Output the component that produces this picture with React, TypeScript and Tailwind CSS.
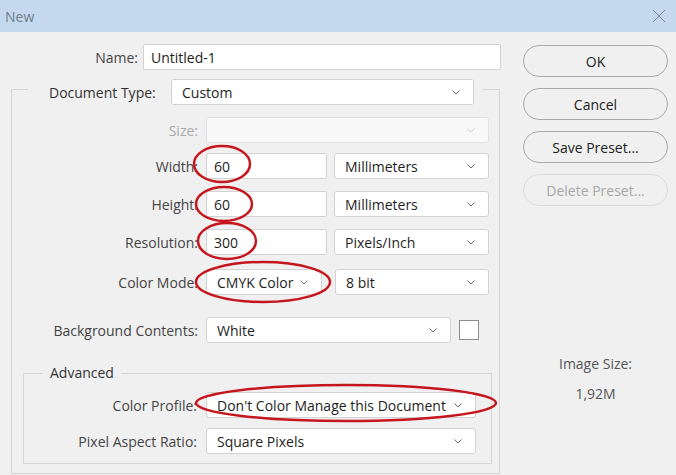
import React from 'react';

const font = { fontFamily: '"Open Sans", "Noto Sans", sans-serif' };

const Chevron: React.FC<{ muted?: boolean }> = ({ muted }) => (
  <svg width="8" height="5" viewBox="0 0 8 5" className="shrink-0">
    <path d="M0.5 0.5 L4 4 L7.5 0.5" fill="none" stroke={muted ? '#cccccc' : '#6a6a6a'} strokeWidth="1" />
  </svg>
);

const Select: React.FC<{ value?: string; w: string; disabled?: boolean }> = ({ value, w, disabled }) => (
  <div
    className={`${w} h-[26px] flex items-center justify-between pl-[10px] pr-[13px] rounded-[3px] border ${
      disabled ? 'border-[#e2e2e2] bg-[#f9f9f9]' : 'border-[#d2d2d2] bg-white'
    } text-[#1e1e1e]`}
  >
    <span className="whitespace-nowrap">{value}</span>
    <Chevron muted={disabled} />
  </div>
);

const Input: React.FC<{ value: string; w: string }> = ({ value, w }) => (
  <div className={`${w} h-[26px] flex items-center pl-[7px] rounded-[2px] border border-[#d2d2d2] bg-white text-[#1e1e1e]`}>
    {value}
  </div>
);

const Row: React.FC<{ label: string; labelW: string; mt: string; muted?: boolean; children: React.ReactNode }> = ({
  label,
  labelW,
  mt,
  muted,
  children,
}) => (
  <div className={`flex items-center ${mt}`}>
    <div className={`${labelW} text-right whitespace-nowrap ${muted ? 'text-[#a9a9a9]' : 'text-[#444]'}`}>{label}</div>
    {children}
  </div>
);

const Btn: React.FC<{ label: string; disabled?: boolean }> = ({ label, disabled }) => (
  <div
    className={`w-[145px] h-[32px] rounded-[16px] border flex items-center justify-center ${
      disabled ? 'border-[#dcdcdc] text-[#a8a8a8]' : 'border-[#a9a9a9] text-[#222]'
    }`}
  >
    {label}
  </div>
);

export default function App() {
  return (
    <div className="relative w-[676px] h-[475px] bg-[#f0f0f0] overflow-hidden text-[14px]" style={font}>
      {/* title bar */}
      <div className="h-[32px] bg-[#c4d9ee] flex items-center justify-between pl-[5px] pr-[10px]">
        <span className="text-[#6f7d8c]">New</span>
        <svg width="14" height="14" viewBox="0 0 14 14">
          <path d="M1 1 L13 13 M13 1 L1 13" stroke="#7b8694" strokeWidth="1" />
        </svg>
      </div>

      <div className="flex">
        {/* left side */}
        <div className="w-[512px]">
          <div className="flex items-center mt-[12px]">
            <div className="w-[138px] text-right text-[#444]">Name:</div>
            <div className="ml-[5px]">
              <Input value="Untitled-1" w="w-[358px]" />
            </div>
          </div>

          <fieldset className="ml-[11px] mt-[9px] w-[489px] h-[395px] border border-[#d6d6d6]">
            <legend className="ml-[16px] pl-[21px] pr-[8px] h-[20px]">
              <div className="flex items-center">
                <span className="w-[112px] text-[#333] whitespace-nowrap">Document Type:</span>
                <div className="ml-[10px]">
                  <Select value="Custom" w="w-[303px]" />
                </div>
              </div>
            </legend>

            <Row label="Size:" labelW="w-[186px]" mt="mt-[18px]" muted>
              <div className="ml-[8px]">
                <Select w="w-[283px]" disabled />
              </div>
            </Row>

            <Row label="Width:" labelW="w-[186px]" mt="mt-[10px]">
              <div className="ml-[8px] flex gap-[7px]">
                <Input value="60" w="w-[121px]" />
                <Select value="Millimeters" w="w-[155px]" />
              </div>
            </Row>

            <Row label="Height:" labelW="w-[186px]" mt="mt-[12px]">
              <div className="ml-[8px] flex gap-[7px]">
                <Input value="60" w="w-[121px]" />
                <Select value="Millimeters" w="w-[155px]" />
              </div>
            </Row>

            <Row label="Resolution:" labelW="w-[186px]" mt="mt-[12px]">
              <div className="ml-[8px] flex gap-[7px]">
                <Input value="300" w="w-[121px]" />
                <Select value="Pixels/Inch" w="w-[155px]" />
              </div>
            </Row>

            <Row label="Color Mode:" labelW="w-[186px]" mt="mt-[14px]">
              <div className="ml-[8px] flex gap-[13px]">
                <Select value="CMYK Color" w="w-[116px]" />
                <Select value="8 bit" w="w-[154px]" />
              </div>
            </Row>

            <Row label="Background Contents:" labelW="w-[186px]" mt="mt-[22px]">
              <div className="ml-[8px] flex items-center gap-[8px]">
                <Select value="White" w="w-[245px]" />
                <div className="w-[20px] h-[20px] bg-white border border-[#8c8c8c]" />
              </div>
            </Row>

            <fieldset className="ml-[11px] mt-[20px] w-[469px] h-[101px] border border-[#d6d6d6]">
              <legend className="ml-[19px] px-[7px] h-[20px] leading-[20px] text-[#333]">Advanced</legend>

              <Row label="Color Profile:" labelW="w-[173px]" mt="mt-[9px]">
                <div className="ml-[9px]">
                  <Select value="Don't Color Manage this Document" w="w-[270px]" />
                </div>
              </Row>
              <Row label="Pixel Aspect Ratio:" labelW="w-[173px]" mt="mt-[10px]">
                <div className="ml-[9px]">
                  <Select value="Square Pixels" w="w-[270px]" />
                </div>
              </Row>
            </fieldset>
          </fieldset>
        </div>

        {/* right side */}
        <div className="ml-[11px] mt-[13px] flex flex-col gap-[11px]">
          <Btn label="OK" />
          <Btn label="Cancel" />
          <Btn label="Save Preset..." />
          <Btn label="Delete Preset..." disabled />
          <div className="mt-[136px] flex flex-col items-center text-[#555]">
            <span>Image Size:</span>
            <span className="mt-[9px]">1,92M</span>
          </div>
        </div>
      </div>

      {/* red annotation marks */}
      <svg className="absolute inset-0 pointer-events-none" width="676" height="475">
        <g fill="none" stroke="#c4161c" strokeWidth="2.5">
          <ellipse cx="222" cy="164" rx="28" ry="18" />
          <ellipse cx="224" cy="204" rx="28" ry="17" />
          <ellipse cx="227" cy="241" rx="29" ry="18" />
          <ellipse cx="263" cy="282" rx="67" ry="20" />
          <ellipse cx="346" cy="403" rx="150" ry="18" />
        </g>
      </svg>
    </div>
  );
}
